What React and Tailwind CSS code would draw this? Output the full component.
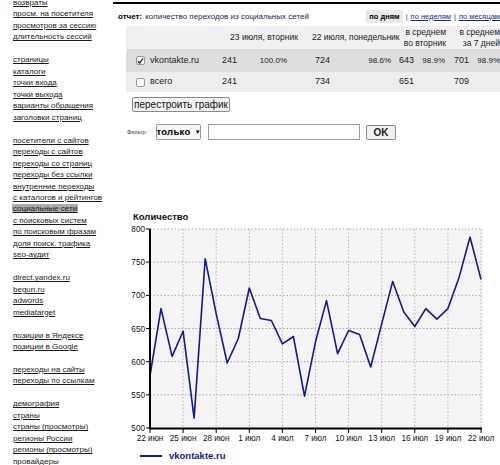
import React from 'react';

const font = { fontFamily: '"Liberation Sans", Arial, sans-serif' };

const menu = [
  ['возвраты', 'просм. на посетителя', 'просмотров за сессию', 'длительность сессий'],
  ['страницы', 'каталоги', 'точки входа', 'точки выхода', 'варианты обращения', 'заголовки страниц'],
  [
    'посетители с сайтов',
    'переходы с сайтов',
    'переходы со страниц',
    'переходы без ссылки',
    'внутренние переходы',
    'с каталогов и рейтингов',
    'социальные сети',
    'с поисковых систем',
    'по поисковым фразам',
    'доля поиск. трафика',
    'seo-аудит',
  ],
  ['direct.yandex.ru', 'begun.ru', 'adwords', 'mediatarget'],
  ['позиции в Яндексе', 'позиции в Google'],
  ['переходы на сайты', 'переходы по ссылкам'],
  ['демография', 'страны', 'страны (просмотры)', 'регионы России', 'регионы (просмотры)', 'провайдеры'],
];

const data = [
  579, 680, 608, 646, 515, 755, 672, 598, 635, 711, 665, 662, 627, 638, 548, 630, 692, 612, 647, 641, 592, 657,
  721, 675, 653, 680, 664, 680, 726, 788, 724,
];
const xLabels = ['22 июн', '25 июн', '28 июн', '1 июл', '4 июл', '7 июл', '10 июл', '13 июл', '16 июл', '19 июл', '22 июл'];

function Sidebar() {
  return (
    <div className="w-[113px] shrink-0 pl-[13px] -mt-[3px] text-[8px] leading-[11.475px] text-[#1a1a1a]">
      {menu.map((group, gi) => (
        <div key={gi} className="mb-[11.475px]">
          {group.map((item) => (
            <div key={item}>
              <span className={`underline whitespace-nowrap ${item === 'социальные сети' ? 'bg-[#ababab] px-px -mx-px' : ''}`}>
                {item}
              </span>
            </div>
          ))}
        </div>
      ))}
    </div>
  );
}

function Checkbox({ checked }) {
  return (
    <div className="w-[9px] h-[9px] border border-[#9a9a9a] rounded-[2px] bg-white flex items-center justify-center">
      {checked && (
        <svg width="8" height="8" viewBox="0 0 8 8">
          <path d="M1 4.2 L3 6.5 L7 1" stroke="#222" strokeWidth="1.4" fill="none" />
        </svg>
      )}
    </div>
  );
}

function Chart() {
  const x = (i) => 34 + (i * 331) / 30;
  const y = (v) => 4 + ((800 - v) * 199) / 300;
  const pts = data.map((v, i) => `${x(i).toFixed(1)},${y(v).toFixed(1)}`).join(' ');
  return (
    <svg width="380" height="222" className="block">
      <rect x="34" y="4" width="333" height="199" fill="#f4f4f4" />
      {[800, 750, 700, 650, 600, 550].map((v) => (
        <line key={v} x1="34" x2="366" y1={y(v)} y2={y(v)} stroke="#a8a8a8" strokeWidth="1" strokeDasharray="1.5 2" />
      ))}
      {xLabels.map((_, k) =>
        k === 0 ? null : (
          <line key={k} x1={x(k * 3)} x2={x(k * 3)} y1="4" y2="203" stroke="#b5b5b5" strokeWidth="1" strokeDasharray="1.5 2" />
        )
      )}
      <polyline points={pts} fill="none" stroke="#16168f" strokeWidth="1.6" strokeLinejoin="round" />
      <line x1="34" x2="34" y1="4" y2="204" stroke="#000" strokeWidth="2" />
      <line x1="33" x2="366" y1="203.5" y2="203.5" stroke="#000" strokeWidth="2" />
      {[800, 750, 700, 650, 600, 550, 500].map((v) => (
        <g key={v}>
          <line x1="30" x2="34" y1={y(v)} y2={y(v)} stroke="#000" strokeWidth="1" />
          <text x="29" y={y(v) + 3} textAnchor="end" fontSize="8.2" fill="#111" style={font}>
            {v}
          </text>
        </g>
      ))}
      {xLabels.map((l, k) => (
        <g key={l}>
          <line x1={x(k * 3)} x2={x(k * 3)} y1="203" y2="208" stroke="#000" strokeWidth="1" />
          <text x={x(k * 3)} y="216" textAnchor="middle" fontSize="8.2" fill="#111" style={font}>
            {l}
          </text>
        </g>
      ))}
    </svg>
  );
}

export default function App() {
  const cols = 'grid grid-cols-[22px_72px_38px_54px_43px_39px_26px_28px_26px_30px]';
  return (
    <div className="w-[500px] h-[465px] overflow-hidden bg-white flex text-black" style={font}>
      <Sidebar />
      <div className="flex-1 min-w-0">
        <div className="h-[2px] bg-black mt-[2px]" />
        <div className="flex items-center h-[19px] mt-[3px] pl-[5px] text-[8px] whitespace-nowrap">
          <span className="font-bold">отчет:</span>
          <span className="ml-[3px] text-[#1b2450]">количество переходов из социальных сетей</span>
          <span className="ml-auto flex items-center text-[7.5px]">
            <span className="font-bold bg-[#e9e9e9] px-[3px] py-px">по дням</span>
            <span className="mx-[3px] text-[#333]">|</span>
            <span className="underline text-[#1a2a8a]">по неделям</span>
            <span className="mx-[3px] text-[#333]">|</span>
            <span className="underline text-[#1a2a8a]">по месяцам</span>
          </span>
        </div>
        <div className="ml-[13px] w-[378px] text-[8.5px] text-[#222]">
          <div className={`${cols} h-[23px] bg-[#f0f0f0] items-center leading-[11px]`}>
            <div className="col-span-2" />
            <div className="col-span-2 text-center pr-[4px] whitespace-nowrap">23 июля, вторник</div>
            <div className="col-span-2 text-center whitespace-nowrap">22 июля, понедельник</div>
            <div className="col-span-2 text-right pr-[2px] whitespace-nowrap">
              в среднем
              <br />
              во вторник
            </div>
            <div className="col-span-2 text-right pr-[4px] whitespace-nowrap">
              в среднем
              <br />
              за 7 дней
            </div>
          </div>
          <div className={`${cols} h-[23px] bg-[#dedede] items-center`}>
            <div className="pl-[10px]">
              <Checkbox checked />
            </div>
            <div className="pl-[2px] text-[9px]">vkontakte.ru</div>
            <div className="pl-[2px] text-[9px]">241</div>
            <div className="text-right pr-[25px] text-[8px]">100.0%</div>
            <div className="pl-[3px] text-[9px]">724</div>
            <div className="text-right pr-[3px] text-[8px]">98.6%</div>
            <div className="pl-[5px] text-[9px]">643</div>
            <div className="text-right pr-[3px] text-[8px]">98.9%</div>
            <div className="pl-[6px] text-[9px]">701</div>
            <div className="text-right pr-[4px] text-[8px]">98.9%</div>
          </div>
          <div className={`${cols} h-[20px] bg-[#ededed] items-center`}>
            <div className="pl-[10px]">
              <Checkbox />
            </div>
            <div className="pl-[2px] text-[9px]">всего</div>
            <div className="pl-[2px] text-[9px]">241</div>
            <div />
            <div className="pl-[3px] text-[9px]">734</div>
            <div />
            <div className="pl-[5px] text-[9px]">651</div>
            <div />
            <div className="pl-[6px] text-[9px]">709</div>
            <div />
          </div>
        </div>
        <div className="ml-[19px] mt-[5px] w-[98px] h-[15px] border border-[#8a8a8a] bg-[#f2f2f2] rounded-[2px] text-[10px] leading-[13px] text-center text-[#111] whitespace-nowrap">
          перестроить график
        </div>
        <div className="flex items-center mt-[12px] ml-[14px] h-[16px]">
          <span className="text-[5.5px] text-[#333] w-[29px]">Фильтр:</span>
          <div className="w-[45px] h-[16px] border border-[#9a9a9a] bg-[#f4f4f4] rounded-[2px] flex items-center justify-center gap-[4px]">
            <span className="text-[9.5px] font-bold tracking-[0.3px]">только</span>
            <span className="text-[6px]">▼</span>
          </div>
          <div className="ml-[7px] w-[152px] h-[16px] border border-[#a0a0a0] bg-white" />
          <div className="ml-[6px] w-[30px] h-[15px] border border-[#8a8a8a] bg-[#f0f0f0] rounded-[2px] text-[10px] leading-[13px] text-center font-bold text-[#222]">
            OK
          </div>
        </div>
        <div className="mt-[71px] ml-[20px] text-[9.5px] font-bold leading-[11px] text-[#111]">Количество</div>
        <div className="ml-[3px] mt-[3px]">
          <Chart />
        </div>
        <div className="flex items-center ml-[27px] mt-[2px]">
          <div className="w-[22px] h-[1.5px] bg-[#16168f]" />
          <span className="ml-[7px] text-[9.5px] font-bold text-[#16168f]">vkontakte.ru</span>
        </div>
      </div>
    </div>
  );
}
